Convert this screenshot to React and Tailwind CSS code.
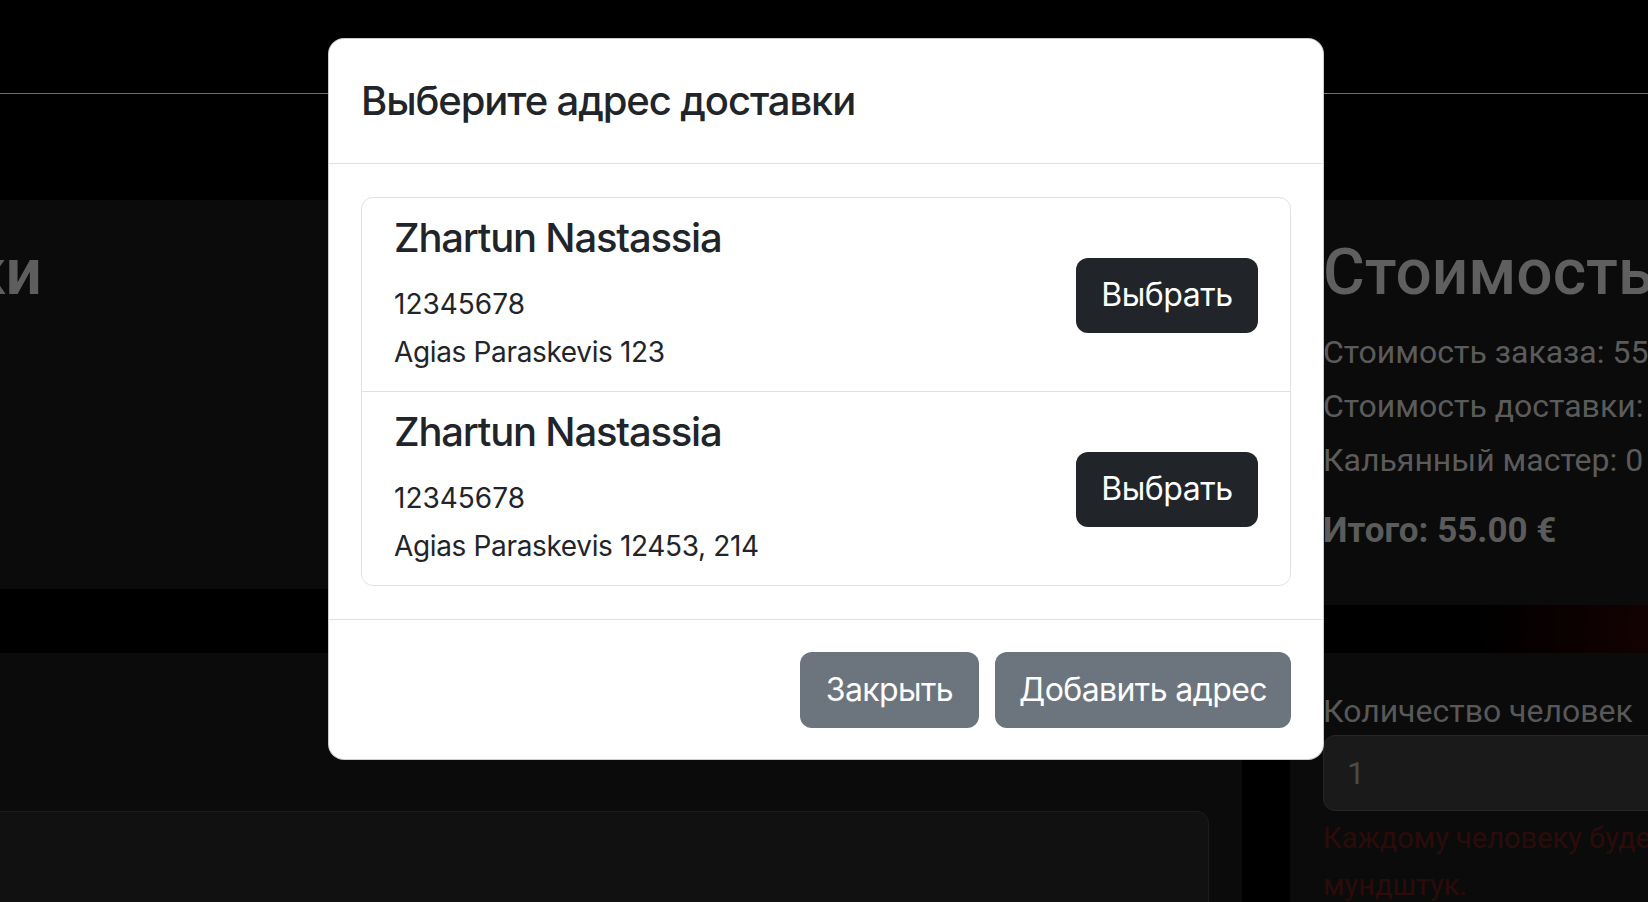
import React from "react";
import clsx from "clsx";

const addresses = [
  { id: 1, name: "Zhartun Nastassia", phone: "12345678", street: "Agias Paraskevis 123" },
  { id: 2, name: "Zhartun Nastassia", phone: "12345678", street: "Agias Paraskevis 12453, 214" },
];

function AddressModal() {
  return (
    <div className="absolute left-[328px] top-[38px] w-[996px] rounded-[16px] border border-black/20 bg-white font-['Inter',sans-serif] text-[#212529]">
      <div className="border-b border-[#dee2e6] px-[32px] py-[32px]">
        <h5 className="text-[40px] font-medium leading-[60px] tracking-[-1.1px]">Выберите адрес доставки</h5>
      </div>

      <div className="px-[32px] pb-[33px] pt-[33px]">
        <ul className="rounded-[12px] border border-[#dee2e6]">
          {addresses.map((a, i) => (
            <li
              key={a.id}
              className={clsx(
                "flex items-center justify-between px-[32px] pb-[15px] pt-[16px]",
                i > 0 && "border-t border-[#dee2e6]"
              )}
            >
              <div>
                <h5 className="mb-[18px] text-[40px] font-medium leading-[48px] tracking-[-1.2px]">{a.name}</h5>
                <p className="text-[28px] leading-[48px]">{a.phone}</p>
                <p className="text-[28px] leading-[48px] tracking-[-0.35px]">{a.street}</p>
              </div>
              <button className="h-[75px] w-[182px] rounded-[12px] bg-[#212529] text-[32px] tracking-[-0.45px] text-white">
                Выбрать
              </button>
            </li>
          ))}
        </ul>
      </div>

      <div className="flex justify-end gap-[16px] border-t border-[#dee2e6] px-[32px] pb-[31px] pt-[32px]">
        <button className="h-[76px] w-[179px] rounded-[12px] bg-[#6c757d] text-[32px] tracking-[-0.6px] text-white">
          Закрыть
        </button>
        <button className="h-[76px] w-[296px] rounded-[12px] bg-[#6c757d] text-[32px] tracking-[-0.6px] text-white">
          Добавить адрес
        </button>
      </div>
    </div>
  );
}

export default function App() {
  return (
    <div className="relative h-[902px] w-[1648px] overflow-hidden bg-black bg-[radial-gradient(circle_at_1660px_628px,#150202_0px,#000000_190px)] font-['Roboto',sans-serif]">
      <header className="h-[94px] border-b border-[#6e6e6e]" />

      <div className="mt-[106px] flex gap-[48px]">
        {/* left column */}
        <div className="flex w-[1242px] shrink-0 flex-col gap-[64px]">
          <section className="h-[389px] bg-[#0b0b0b] pt-[34px]">
            <div className="flex w-[42px] justify-end">
              <h2 className="whitespace-nowrap text-[64px] font-semibold leading-[77px] text-[#5e5e5e]">
                Адрес доставки
              </h2>
            </div>
          </section>
          <section className="h-[300px] bg-[#0b0b0b] pr-[33px] pt-[158px]">
            <div className="-ml-[40px] h-[200px] rounded-[12px] border border-[#1c1c1c] bg-[#111111]" />
          </section>
        </div>

        {/* right column */}
        <div className="flex w-[808px] shrink-0 flex-col gap-[48px]">
          <section className="h-[405px] bg-[#0b0b0b] pl-[33px] pt-[34px] text-[#5b5b5b]">
            <h2 className="mb-[14px] whitespace-nowrap text-[64px] font-medium leading-[77px] text-[#5f5f5f]">
              Стоимость
            </h2>
            <p className="whitespace-nowrap text-[32px] leading-[54px]">Стоимость заказа: 55.00 €</p>
            <p className="whitespace-nowrap text-[32px] leading-[54px]">Стоимость доставки: 0 €</p>
            <p className="whitespace-nowrap text-[32px] leading-[54px]">Кальянный мастер: 0 €</p>
            <p className="mt-[20px] whitespace-nowrap text-[35px] font-bold leading-[48px]">Итого: 55.00 €</p>
          </section>

          <section className="h-[300px] bg-[#0b0b0b] pl-[33px] pt-[34px]">
            <label className="block text-[32px] leading-[48px] text-[#585858]">Количество человек</label>
            <div className="flex h-[76px] items-center rounded-[12px] border border-[#262626] bg-[#1a1a1a] pl-[23px] text-[32px] text-[#4a4a4a]">
              1
            </div>
            <p className="mt-[4px] whitespace-nowrap text-[29px] leading-[47px] text-[#2c0b0b]">
              Каждому человеку будет выдан индивидуальный
              <br />
              мундштук.
            </p>
          </section>
        </div>
      </div>

      <AddressModal />
    </div>
  );
}
